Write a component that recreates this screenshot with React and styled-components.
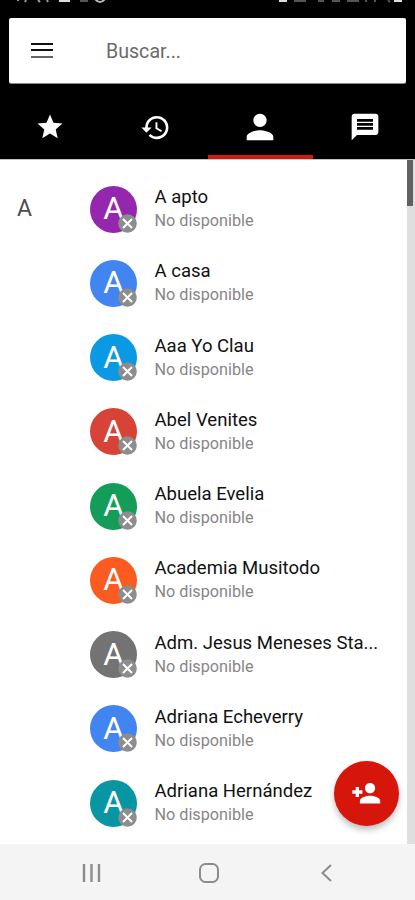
import React from "react";
import styled, { createGlobalStyle } from "styled-components";

const Global = createGlobalStyle`
  * { box-sizing: border-box; }
  body { margin: 0; background: #fff; overflow: hidden; font-family: Roboto, sans-serif; }
`;

const Screen = styled.div`
  width: 415px;
  height: 900px;
  display: flex;
  flex-direction: column;
  background: #fff;
  position: relative;
  overflow: hidden;
`;

const Header = styled.header`
  flex: none;
  height: 159px;
  background: #000;
  display: flex;
  flex-direction: column;
`;

const StatusBar = styled.div`
  height: 18px;
  svg { display: block; }
`;

const SearchCard = styled.div`
  height: 65px;
  margin: 0 9px;
  padding-left: 21px;
  display: flex;
  align-items: center;
  gap: 52px;
  background: #fff;
  border-radius: 2px;
  box-shadow: 0 1px 0 #888;
`;

const Placeholder = styled.span`
  padding-top: 2px;
  font-size: 19.6px;
  color: #6b6b6b;
`;

const MenuIcon = styled.div`
  width: 24px;
  height: 18px;
  padding: 1px 1px 0;
  display: flex;
  flex-direction: column;
  gap: 4.5px;
`;

const MenuBar = styled.i`
  height: 2px;
  background: ${(p) => p.$color};
`;

const Tabs = styled.nav`
  flex: 1;
  display: grid;
  grid-template-columns: 103px 105px 105px 102px;
`;

const Tab = styled.div`
  display: flex;
  align-items: center;
  justify-content: center;
  padding: 16px ${(p) => p.$right || 0}px 0 ${(p) => p.$left || 0}px;
  border-bottom: 4px solid ${(p) => (p.$active ? "#cf1a10" : "#000")};
`;

const Body = styled.main`
  height: 685px;
  display: flex;
  border-top: 1px solid #c4c4c4;
`;

const Section = styled.div`
  width: 90px;
  padding: 35px 0 0 17px;
  font-size: 23px;
  line-height: 28px;
  color: #4d4d4d;
`;

const List = styled.div`
  flex: 1;
  padding-top: 12px;
`;

const Row = styled.div`
  height: 74.25px;
  display: flex;
  align-items: center;
  gap: 17.5px;
`;

const Avatar = styled.div`
  width: 47px;
  height: 47px;
  border-radius: 50%;
  flex: none;
  display: flex;
  align-items: center;
  justify-content: center;
  position: relative;
  padding-bottom: 1px;
  font-size: 31.5px;
  color: #fff;
  background: ${(p) => p.$color};
`;

const Badge = styled.svg`
  position: absolute;
  right: 0;
  bottom: 0;
  width: 19px;
  height: 19px;
`;

const Labels = styled.div`
  display: flex;
  flex-direction: column;
  padding-bottom: 1px;
  white-space: nowrap;
`;

const Name = styled.span`
  font-size: 18.55px;
  line-height: 24px;
  color: #111;
`;

const Status = styled.span`
  font-size: 16.2px;
  line-height: 23px;
  color: #868686;
`;

const ScrollTrack = styled.div`
  width: 8px;
  background: #dfdfdf;
`;

const ScrollThumb = styled.div`
  width: 6px;
  height: 46px;
  background: #616161;
`;

const Fab = styled.div`
  position: absolute;
  left: 334px;
  top: 761px;
  width: 65px;
  height: 65px;
  border-radius: 50%;
  background: #d6150b;
  box-shadow: 0 4px 6px rgba(0, 0, 0, 0.25);
  display: flex;
  align-items: center;
  justify-content: center;
`;

const NavBar = styled.footer`
  flex: 1;
  background: #f4f4f4;
  display: grid;
  grid-template-columns: 117px 117px 1fr;
  align-items: center;
  padding: 2px 0 0 82px;
`;

const Icon = ({ d, size }) => (
  <svg width={size} height={size} viewBox="0 0 24 24" fill="#fff">
    <path d={d} />
  </svg>
);

const STAR = "M12 17.27 18.18 21l-1.64-7.03L22 9.24l-7.19-.61L12 2 9.19 8.63 2 9.24l5.46 4.73L5.82 21z";
const HISTORY = "M13 3a9 9 0 0 0-9 9H1l3.89 3.89.07.14L9 12H6c0-3.87 3.13-7 7-7s7 3.13 7 7-3.13 7-7 7c-1.93 0-3.68-.79-4.94-2.06l-1.42 1.42A8.954 8.954 0 0 0 13 21a9 9 0 0 0 0-18zm-1 5v5l4.28 2.54.72-1.21-3.5-2.08V8H12z";
const PERSON = "M12 12c2.21 0 4-1.79 4-4s-1.79-4-4-4-4 1.79-4 4 1.79 4 4 4zm0 2c-2.67 0-8 1.34-8 4v2h16v-2c0-2.66-5.33-4-8-4z";
const MESSAGE = "M20 2H4c-1.1 0-1.99.9-1.99 2L2 22l4-4h14c1.1 0 2-.9 2-2V4c0-1.1-.9-2-2-2zm-2 12H6v-2h12v2zm0-3H6V9h12v2zm0-3H6V6h12v2z";
const PERSON_ADD = "M15 12c2.21 0 4-1.79 4-4s-1.79-4-4-4-4 1.79-4 4 1.79 4 4 4zM6.300 9.700V7H3.700v2.700H1v2.600h2.700v2.700h2.600v-2.700h2.700V9.700zM15 14c-2.67 0-8 1.34-8 4v2h16v-2c0-2.66-5.33-4-8-4z";

const contacts = [
  ["A apto", "#9526ae"],
  ["A casa", "#4284f0"],
  ["Aaa Yo Clau", "#0a99e2"],
  ["Abel Venites", "#d84337"],
  ["Abuela Evelia", "#149d59"],
  ["Academia Musitodo", "#fb5a20"],
  ["Adm. Jesus Meneses Sta...", "#737373"],
  ["Adriana Echeverry", "#4284f0"],
  ["Adriana Hernández", "#0896a3"],
];

export default function App() {
  return (
    <Screen>
      <Global />
      <Header>
        <StatusBar>
          <svg width="415" height="4" viewBox="0 0 415 4" fill="none" stroke="#999" strokeWidth="2">
            <path d="M18 0v1M26 0l-1 2M38 0l2 2M47 0l1 2" />
            <path d="M59 1h11M279 1h8M394 1h8" stroke="#ddd" />
            <path d="M80 1h8M294 1h12M318 1h6M332 1h8M347 1h12M366 0v2M375 0v2M388 0l2 2" stroke="#555" />
            <path d="M95-1q5 6 10 0" stroke="#bbb" />
          </svg>
        </StatusBar>
        <SearchCard>
          <MenuIcon>
            <MenuBar $color="#111" />
            <MenuBar $color="#111" />
            <MenuBar $color="#666" />
          </MenuIcon>
          <Placeholder>Buscar...</Placeholder>
        </SearchCard>
        <Tabs>
          <Tab $right={3}><Icon d={STAR} size={30} /></Tab>
          <Tab><Icon d={HISTORY} size={31} /></Tab>
          <Tab $active $right={1}><Icon d={PERSON} size={40} /></Tab>
          <Tab $left={2}><Icon d={MESSAGE} size={32} /></Tab>
        </Tabs>
      </Header>
      <Body>
        <Section>A</Section>
        <List>
          {contacts.map(([name, color]) => (
            <Row key={name}>
              <Avatar $color={color}>
                A
                <Badge viewBox="0 0 19 19">
                  <circle cx="9.5" cy="9.5" r="9.3" fill="#8d8d8d" />
                  <path d="M5 5l9 9M14 5l-9 9" stroke="#fff" strokeWidth="2" />
                </Badge>
              </Avatar>
              <Labels>
                <Name>{name}</Name>
                <Status>No disponible</Status>
              </Labels>
            </Row>
          ))}
        </List>
        <ScrollTrack><ScrollThumb /></ScrollTrack>
      </Body>
      <NavBar>
        <svg width="20" height="18" viewBox="0 0 20 18" stroke="#8c8c8c" strokeWidth="2.4">
          <path d="M2 0v18M9.500 0v18M17 0v18" />
        </svg>
        <svg width="20" height="20" viewBox="0 0 20 20" fill="none" stroke="#8c8c8c" strokeWidth="2">
          <rect x="1" y="1" width="18" height="18" rx="5.5" />
        </svg>
        <svg width="20" height="18" viewBox="0 0 20 18" fill="none" stroke="#8c8c8c" strokeWidth="2">
          <path d="M15 1L6.500 9l8.500 8" />
        </svg>
      </NavBar>
      <Fab><Icon d={PERSON_ADD} size={30.5} /></Fab>
    </Screen>
  );
}
